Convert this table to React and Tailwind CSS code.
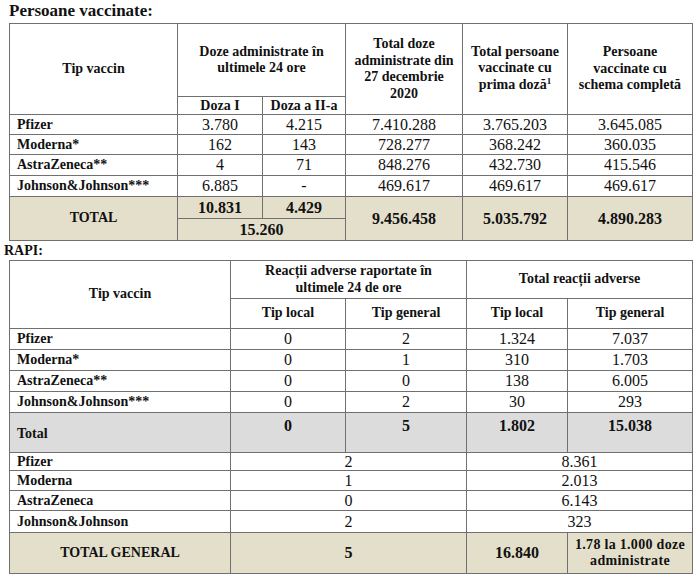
import React from "react";

const rows1 = [
  ["Pfizer", "3.780", "4.215", "7.410.288", "3.765.203", "3.645.085"],
  ["Moderna*", "162", "143", "728.277", "368.242", "360.035"],
  ["AstraZeneca**", "4", "71", "848.276", "432.730", "415.546"],
  ["Johnson&Johnson***", "6.885", "-", "469.617", "469.617", "469.617"],
];

const rows2 = [
  ["Pfizer", "0", "2", "1.324", "7.037"],
  ["Moderna*", "0", "1", "310", "1.703"],
  ["AstraZeneca**", "0", "0", "138", "6.005"],
  ["Johnson&Johnson***", "0", "2", "30", "293"],
];

const rows3 = [
  ["Pfizer", "2", "8.361"],
  ["Moderna", "1", "2.013"],
  ["AstraZeneca", "0", "6.143"],
  ["Johnson&Johnson", "2", "323"],
];

function H({ className = "", bg = "bg-white", children }) {
  return (
    <div
      className={`${bg} flex items-center justify-center text-center font-bold text-[14px] leading-[16.5px] ${className}`}
    >
      <div>{children}</div>
    </div>
  );
}

function L({ className = "", bg = "bg-white", children }) {
  return (
    <div className={`${bg} flex items-center pl-[7px] font-bold text-[14px] leading-none ${className}`}>
      {children}
    </div>
  );
}

function N({ className = "", bg = "bg-white", children }) {
  return (
    <div className={`${bg} flex justify-center text-[16px] leading-none ${className}`}>
      {children}
    </div>
  );
}

const TAN = "bg-[#e3dfcb]";
const GRAY = "bg-[#dcdcdc]";

export default function App() {
  return (
    <div className="w-[700px] h-[577px] bg-white overflow-hidden text-[#111] [font-family:'Liberation_Serif',serif]">
      <div className="h-[23px] pl-[9px] font-bold text-[17px] leading-[22px]">Persoane vaccinate:</div>

      <div className="ml-[9px] w-[684px] grid grid-cols-[167px_84px_82px_116px_104px_124px] grid-rows-[72px_17px_19px_19px_20px_20px_21px_21px] gap-px p-px bg-[#707070]">
        <H className="row-span-2">Tip vaccin</H>
        <H className="col-span-2">
          Doze administrate în
          <br />
          ultimele 24 ore
        </H>
        <H className="row-span-2">
          Total doze
          <br />
          administrate din
          <br />
          27 decembrie
          <br />
          2020
        </H>
        <H className="row-span-2">
          Total persoane
          <br />
          vaccinate cu
          <br />
          prima doză<span className="relative -top-[5px] text-[9px]">1</span>
        </H>
        <H className="row-span-2">
          Persoane
          <br />
          vaccinate cu
          <br />
          schema completă
        </H>
        <H className="leading-none">Doza I</H>
        <H className="leading-none">Doza a II-a</H>

        {rows1.map((r) => (
          <React.Fragment key={r[0]}>
            <L>{r[0]}</L>
            <N className="items-center">{r[1]}</N>
            <N className="items-center">{r[2]}</N>
            <N className="items-center">{r[3]}</N>
            <N className="items-center">{r[4]}</N>
            <N className="items-center">{r[5]}</N>
          </React.Fragment>
        ))}

        <H bg={TAN} className="row-span-2">TOTAL</H>
        <N bg={TAN} className="items-center font-bold">10.831</N>
        <N bg={TAN} className="items-center font-bold">4.429</N>
        <N bg={TAN} className="items-center row-span-2 font-bold">9.456.458</N>
        <N bg={TAN} className="items-center row-span-2 font-bold">5.035.792</N>
        <N bg={TAN} className="items-center row-span-2 font-bold">4.890.283</N>
        <N bg={TAN} className="items-center col-span-2 font-bold">15.260</N>
      </div>

      <div className="h-[19px] pl-[4px] pt-[1px] font-bold text-[14px] leading-[18px]">RAPI:</div>

      <div className="ml-[9px] w-[684px] grid grid-cols-[220px_114px_120px_100px_124px] grid-rows-[37px_29px_20px_20px_20px_20px_39px_17px_19px_19px_21px_40px] gap-px p-px bg-[#707070]">
        <H className="row-span-2">Tip vaccin</H>
        <H className="col-span-2">
          Reacții adverse raportate în
          <br />
          ultimele 24 de ore
        </H>
        <H className="col-span-2">Total reacții adverse</H>
        <H>Tip local</H>
        <H>Tip general</H>
        <H>Tip local</H>
        <H>Tip general</H>

        {rows2.map((r) => (
          <React.Fragment key={r[0]}>
            <L>{r[0]}</L>
            <N className="items-center">{r[1]}</N>
            <N className="items-center">{r[2]}</N>
            <N className="items-center">{r[3]}</N>
            <N className="items-center">{r[4]}</N>
          </React.Fragment>
        ))}

        <L bg={GRAY} className="pt-[2px]">Total</L>
        <N bg={GRAY} className="items-start font-bold pt-[5px]">0</N>
        <N bg={GRAY} className="items-start font-bold pt-[5px]">5</N>
        <N bg={GRAY} className="items-start font-bold pt-[5px]">1.802</N>
        <N bg={GRAY} className="items-start font-bold pt-[5px]">15.038</N>

        {rows3.map((r) => (
          <React.Fragment key={r[0]}>
            <L>{r[0]}</L>
            <N className="items-center col-span-2">{r[1]}</N>
            <N className="items-center col-span-2">{r[2]}</N>
          </React.Fragment>
        ))}

        <H bg={TAN}>TOTAL GENERAL</H>
        <N bg={TAN} className="items-center col-span-2 font-bold">5</N>
        <N bg={TAN} className="items-center font-bold">16.840</N>
        <H bg={TAN} className="text-[13px] leading-[15px] tracking-[0.3px]">
          1.78 la 1.000 doze
          <br />
          administrate
        </H>
      </div>
    </div>
  );
}
